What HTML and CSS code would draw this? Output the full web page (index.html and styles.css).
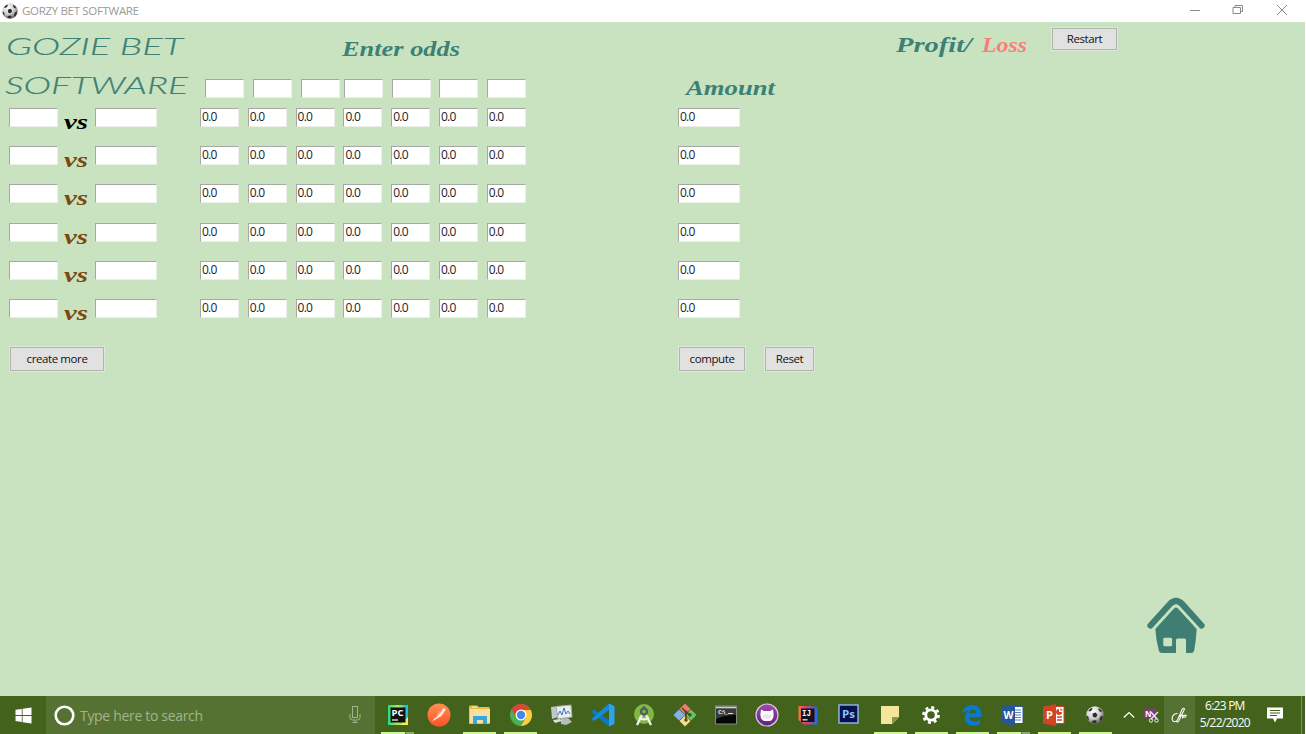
FILE: index.html
```html
<!DOCTYPE html>
<html lang="en">
<head>
<meta charset="utf-8">
<title>GORZY BET SOFTWARE</title>
<link rel="stylesheet" href="styles.css">
</head>
<body>
<svg class="defs" width="0" height="0">
  <defs>
    <radialGradient id="shade" cx=".38" cy=".3" r=".75"><stop offset="0" stop-color="#fff"/><stop offset=".55" stop-color="#ccc"/><stop offset="1" stop-color="#555"/></radialGradient>
    <linearGradient id="orange" x2="0" y2="1"><stop stop-color="#ff8f52"/><stop offset="1" stop-color="#ff5226"/></linearGradient>
    <linearGradient id="pcbg"><stop stop-color="#20d889"/><stop offset=".5" stop-color="#b6e84a"/><stop offset="1" stop-color="#13b6e8"/></linearGradient>
    <linearGradient id="ijbg"><stop stop-color="#f2793c"/><stop offset=".35" stop-color="#e63a6d"/><stop offset="1" stop-color="#1b6cf0"/></linearGradient>
    <linearGradient id="purple" x2="0" y2="1"><stop stop-color="#a14bb0"/><stop offset="1" stop-color="#5e2283"/></linearGradient>
    <symbol id="ball" viewBox="0 0 18 18">
      <circle cx="9" cy="9" r="8.7" fill="url(#shade)"/>
      <path d="M6.500 7.500 9.500 6.500l2 2.300-1.500 2.700-3-.4ZM2.500 4.500 5.300 2l1.400.5-1.400 2.300-2.300.8ZM12.700 2l2.700 2.300.3 2-2-.7-1.400-2.300ZM.700 9.600l1.700 1.100.5 2.700-.5.600C1.200 13.200.700 11.500.700 9.600ZM6.700 14.500l3.200-.3.900 1.400-1.400 1.500c-1.300.1-2.500-.3-3.400-.9ZM14.400 10.800l2.500-1.100c0 2.300-1 4.200-2.500 5.400l-.9-1.100Z" fill="#2c2c2c"/>
    </symbol>
  </defs>
</svg>

<div class="titlebar">
  <svg class="app-icon" width="16" height="16"><use href="#ball"/></svg>
  <span class="app-name">GORZY BET SOFTWARE</span>
  <svg class="window-controls" width="106" height="22" fill="none" stroke="#8a8a8a">
    <path d="M0 10.500h10M43 7.500h7.500v6h-7.500zM45 7.500v-2h7.500v6h-2M87 5l10 10M97 5L87 15"/>
  </svg>
</div>

<main class="workspace">
  <header class="head">
    <svg class="brand" width="205" height="86">
      <text x="6" y="33" textLength="177" lengthAdjust="spacingAndGlyphs">GOZIE BET</text>
      <text x="5" y="72" textLength="183" lengthAdjust="spacingAndGlyphs">SOFTWARE</text>
    </svg>
    <div class="odds-head">
      <svg class="script" width="330" height="57"><text x="137" y="34" textLength="118" lengthAdjust="spacingAndGlyphs">Enter odds</text></svg>
      <div class="labels"><span class="field odd"></span><span class="field odd"></span><span class="field odd third"></span><span class="field odd"></span><span class="field odd"></span><span class="field odd"></span><span class="field odd"></span></div>
    </div>
    <svg class="script amount-head" width="212" height="86"><text x="8" y="73" textLength="89" lengthAdjust="spacingAndGlyphs">Amount</text></svg>
    <svg class="script" width="162" height="86"><text x="6" y="30" textLength="76" lengthAdjust="spacingAndGlyphs">Profit/</text><text class="loss" x="92" y="30" textLength="45" lengthAdjust="spacingAndGlyphs">Loss</text></svg>
    <button class="btn restart">Restart</button>
  </header>

  <section class="matches">
    <div class="match first"><span class="field home"></span><svg class="vs" width="26" height="25"><text x="1" y="20" textLength="24" lengthAdjust="spacingAndGlyphs">vs</text></svg><span class="field away"></span><div class="odds"><span class="field">0.0</span><span class="field">0.0</span><span class="field">0.0</span><span class="field">0.0</span><span class="field">0.0</span><span class="field">0.0</span><span class="field">0.0</span></div><span class="field amount">0.0</span></div>
    <div class="match"><span class="field home"></span><svg class="vs" width="26" height="25"><text x="1" y="20" textLength="24" lengthAdjust="spacingAndGlyphs">vs</text></svg><span class="field away"></span><div class="odds"><span class="field">0.0</span><span class="field">0.0</span><span class="field">0.0</span><span class="field">0.0</span><span class="field">0.0</span><span class="field">0.0</span><span class="field">0.0</span></div><span class="field amount">0.0</span></div>
    <div class="match"><span class="field home"></span><svg class="vs" width="26" height="25"><text x="1" y="20" textLength="24" lengthAdjust="spacingAndGlyphs">vs</text></svg><span class="field away"></span><div class="odds"><span class="field">0.0</span><span class="field">0.0</span><span class="field">0.0</span><span class="field">0.0</span><span class="field">0.0</span><span class="field">0.0</span><span class="field">0.0</span></div><span class="field amount">0.0</span></div>
    <div class="match"><span class="field home"></span><svg class="vs" width="26" height="25"><text x="1" y="20" textLength="24" lengthAdjust="spacingAndGlyphs">vs</text></svg><span class="field away"></span><div class="odds"><span class="field">0.0</span><span class="field">0.0</span><span class="field">0.0</span><span class="field">0.0</span><span class="field">0.0</span><span class="field">0.0</span><span class="field">0.0</span></div><span class="field amount">0.0</span></div>
    <div class="match"><span class="field home"></span><svg class="vs" width="26" height="25"><text x="1" y="20" textLength="24" lengthAdjust="spacingAndGlyphs">vs</text></svg><span class="field away"></span><div class="odds"><span class="field">0.0</span><span class="field">0.0</span><span class="field">0.0</span><span class="field">0.0</span><span class="field">0.0</span><span class="field">0.0</span><span class="field">0.0</span></div><span class="field amount">0.0</span></div>
    <div class="match"><span class="field home"></span><svg class="vs" width="26" height="25"><text x="1" y="20" textLength="24" lengthAdjust="spacingAndGlyphs">vs</text></svg><span class="field away"></span><div class="odds"><span class="field">0.0</span><span class="field">0.0</span><span class="field">0.0</span><span class="field">0.0</span><span class="field">0.0</span><span class="field">0.0</span><span class="field">0.0</span></div><span class="field amount">0.0</span></div>
  </section>

  <div class="actions">
    <button class="btn create">create more</button>
    <button class="btn compute">compute</button>
    <button class="btn reset">Reset</button>
  </div>

  <div class="home-row">
    <svg width="58" height="57" viewBox="0 0 58 57">
      <path d="M3.500 28.500 22.500 7.500Q29 .500 35.500 7.500L54.500 28.500" fill="none" stroke="#3f7f73" stroke-width="6.300" stroke-linecap="round"/>
      <path d="M27 11.500q2-2 4 0L49.700 32Q49 44 47.200 53.500 46.500 56 44 56h-5V43q0-1.500-1.500-1.500h-7Q29 41.500 29 43v13H15q-2.500 0-3.200-2.500Q9 43 8.300 32Z" fill="#3f7f73"/>
      <rect x="16.300" y="40.800" width="8.800" height="8.500" rx="1.500" fill="#c9e3c0"/>
    </svg>
  </div>
</main>

<footer class="taskbar">
  <div class="start"><svg width="17" height="17" fill="#fff"><path d="M.5 2.800 6.800 1.900V8H.5ZM7.600 1.800 16.500.5V8H7.600ZM.5 8.900h6.300V15L.5 14.100ZM7.600 8.900h8.900v7.600L7.600 15.200Z"/></svg></div>
  <div class="search">
    <svg width="21" height="21"><circle cx="10.500" cy="10.500" r="8.800" fill="none" stroke="#fff" stroke-width="2.600"/></svg>
    <span class="hint">Type here to search</span>
    <svg class="mic" width="12" height="18" fill="none" stroke="#a3b48e"><rect x="3.500" y=".5" width="5" height="11"/><path d="M1 8v3.500q0 2.500 2.500 2.500h5q2.500 0 2.500-2.500V8M6 14v2.500M3.500 16.500h5"/></svg>
  </div>
  <div class="apps">
    <div class="app open more"><svg width="24" height="24"><path d="M2 2h16l4 3v17H2Z" fill="url(#pcbg)"/><path d="M17 2h5v9Z" fill="#14c5ef"/><path d="M14 22l8-8v8Z" fill="#f0ee47"/><rect x="4.500" y="4.500" width="15" height="15" fill="#111"/><text x="5.500" y="12.700" class="glyph" font-size="9" textLength="12" lengthAdjust="spacingAndGlyphs">PC</text><path d="M6 17h6" stroke="#ddd" stroke-width="1.400"/></svg></div>
    <div class="app"><svg width="24" height="24"><circle cx="12" cy="12" r="11.500" fill="url(#orange)"/><path d="M5 18.500 12 9l5-4 2 1.500-4.500 6.500L6 18Z" fill="#fde3d5"/><path d="m8 15 7-8" stroke="#ff7340"/></svg></div>
    <div class="app open"><svg width="24" height="24"><path d="M1 4q0-1.500 1.500-1.500H9L11 4h10.500v17H1Z" fill="#e8bd48"/><path d="M2 6h20v14H2Z" fill="#f9dfa0"/><path d="M5 21v-8h14v8h-4v-4H9v4Z" fill="#35a8dd"/><path d="M4 4h5" stroke="#fff4b8"/></svg></div>
    <div class="app open"><svg width="24" height="24"><circle cx="12" cy="12" r="11" fill="#4caf50"/><path d="M12 12 2.500 6.500A11 11 0 0 1 21.500 6.500Z" fill="#d9453a"/><path d="M12 7h9.800A11 11 0 0 1 12 23l5-8.500Z" fill="#fccd3d"/><path d="m2.500 6.500 5 8 4.500-7Z" fill="#d9453a"/><circle cx="12" cy="12" r="5.500" fill="#fff"/><circle cx="12" cy="12" r="4.200" fill="#4688ef"/></svg></div>
    <div class="app"><svg width="24" height="24"><path d="m1 4 7-1v11l-6 2Z" fill="#c1c6c9"/><path d="m6 3.500 15-1.500 1 12-14 2Z" fill="#e9edef" stroke="#a5aaac"/><path d="m8 12 2-4 2 4 2-7 2 6 2-3 2 3" fill="none" stroke="#2e7daa"/><path d="m11 16 7-1 4 4-6 3-5-1Z" fill="#b8bcbd"/><path d="m3 17 7-1 2 2-7 2Z" fill="#ddd"/></svg></div>
    <div class="app"><svg width="24" height="24"><path d="m18 .5 5.500 2.500v18L18 23.500Z" fill="#29a4ed"/><path d="M1 8l2.300-1.500L18 17.500v6L1 9.500Z" fill="#087bc7"/><path d="M1 15.500 18 .5V7L3.300 18 1 16.500Z" fill="#168bd8"/></svg></div>
    <div class="app"><svg width="24" height="24"><circle cx="12" cy="11" r="10" fill="#80b942"/><path d="M11 10 5 22M13 10l6 12M7 14.500q5 3.500 10 0" stroke="#edf0e8" stroke-width="2.400" fill="none"/><circle cx="12" cy="8.500" r="3" fill="#80b942" stroke="#53605a" stroke-width="2.500"/><path d="M12 3v3" stroke="#53605a" stroke-width="2"/></svg></div>
    <div class="app"><svg width="24" height="24"><path d="m12 .5 5.500 5.500L12 11.500 6.500 6Z" fill="#f27974"/><path d="m6 6.500 6 5.500-6 5.500L.5 12Z" fill="#85aeef"/><path d="m18 6.500 5.500 5.500-5.500 5.500L12 12Z" fill="#6ec45a"/><path d="m12 12.500 5.500 5.500-5.500 5.500L6.500 18Z" fill="#f7df7f"/><path d="m9 5 4 4v8M13 9l4 3" stroke="#4b4a2c" stroke-width="1.700" fill="none"/><g fill="#4b4a2c"><circle cx="13" cy="9" r="1.500"/><circle cx="17" cy="12" r="1.700"/><circle cx="13" cy="17" r="1.700"/></g></svg></div>
    <div class="app"><svg width="24" height="24"><rect x="1.500" y="3" width="21" height="18" fill="#050505" stroke="#888"/><path d="M2 3.500h20v2H2Z" fill="#ccc"/><path d="M2 6h20v6Q10 12 2 16Z" fill="#3a3a3a"/><text x="4" y="11" class="glyph" font-size="5.500">C:\_</text><path d="M14 10.500h5" stroke="#ddd"/></svg></div>
    <div class="app"><svg width="24" height="24"><circle cx="12" cy="12" r="11" fill="url(#purple)" stroke="#dec8e2" stroke-width="1.200"/><path d="M6 6.500 9 8h6l3-1.500.5 4q.6 5.800-3.500 7.500H9q-4-1.700-3.500-7.500Z" fill="#fff"/><path d="M7.500 12q4.500-2 9 0 0 4-4.500 4t-4.500-4" fill="#eee4ed"/></svg></div>
    <div class="app"><svg width="24" height="24"><path d="M2.500 3H14l7.500 1v17.500H8L2.500 17Z" fill="url(#ijbg)"/><rect x="5" y="5.500" width="13.500" height="13.500" fill="#15121c"/><text x="6" y="13" class="glyph serif" font-size="9" textLength="9" lengthAdjust="spacingAndGlyphs">IJ</text><path d="M6.500 16.800h5" stroke="#ddd" stroke-width="1.400"/></svg></div>
    <div class="app"><svg width="24" height="24"><rect x="2" y="2" width="19" height="18" fill="#0a0f4f" stroke="#8bbde9" stroke-width="1.400"/><text x="5" y="15" class="glyph ps" font-size="11" textLength="13" lengthAdjust="spacingAndGlyphs">Ps</text></svg></div>
    <div class="app open"><svg width="24" height="24"><path d="M3 3h18v11l-7 7H3Z" fill="#f3e69b"/><path d="M14 21v-7h7Z" fill="#8d964e"/></svg></div>
    <div class="app open"><svg width="24" height="24"><circle cx="12" cy="12" r="5.200" fill="none" stroke="#fff" stroke-width="2.800"/><circle cx="12" cy="12" r="7.600" fill="none" stroke="#fff" stroke-width="2.600" stroke-dasharray="3 2.970"/></svg></div>
    <div class="app open"><svg width="24" height="24"><path d="M2 10.500C3.200 4.700 7 2 12 2c6 0 9.500 4.300 9.500 10v2H9c.3 5 7 5.400 11 3v3.900c-7 3.600-15 1.500-15-6 0-4 2-6.500 5-8C6.800 7.300 4 8.500 2 10.500Zm7-.3h7c0-5-6.500-4.500-7 0Z" fill="#087bd0" fill-rule="evenodd"/></svg></div>
    <div class="app open more"><svg width="24" height="24"><path d="M12 3.500h10v17H12Z" fill="#fff" stroke="#2d5797"/><path d="M14 7h6M14 9.500h6M14 12h6M14 14.500h6M14 17h6" stroke="#5b7fb8"/><path d="m1 3.500 13-2.500v22L1 20.500Z" fill="#285797"/><text x="2.500" y="15.500" class="glyph" font-size="10" textLength="10" lengthAdjust="spacingAndGlyphs">W</text></svg></div>
    <div class="app open"><svg width="24" height="24"><path d="M12 3.500h10v17H12Z" fill="#fff" stroke="#cf4525"/><path d="M15 14h5M15 17h5" stroke="#cf4525" stroke-width="1.500"/><path d="M17 6a3 3 0 1 0 3 3h-3ZM18.500 5v2.500H21" fill="#cf4525"/><path d="m1 3.500 13-2.500v22L1 20.500Z" fill="#cf4525"/><text x="4" y="16" class="glyph" font-size="11">P</text></svg></div>
    <div class="app open"><svg width="18" height="18"><use href="#ball"/></svg></div>
  </div>
  <div class="tray">
    <svg class="chevron" width="12" height="8" fill="none" stroke="#fff" stroke-width="1.200"><path d="m.8 6.500 5.200-5 5.200 5"/></svg>
    <svg class="snip" width="15" height="15"><path d="M0 1 12 0v12L0 10Z" fill="#81397e"/><text x="1" y="8.500" class="glyph" font-size="8">N</text><path d="m7 4 6 7M14 4l-7 7" stroke="#eee" stroke-width="1.400"/><circle cx="7" cy="12.500" r="1.700" fill="none" stroke="#eee"/><circle cx="12.500" cy="12.500" r="1.700" fill="none" stroke="#eee"/></svg>
    <div class="pen"><svg width="17" height="17" fill="none" stroke="#fff" stroke-width="1.100"><path d="M6.500 6.500C3 6 .8 9.500 1.200 12.500c.5 3 4 2.800 5.500 0L11 2.500q1.500-2.200 2.500-.5L8 13.500q-1.500 2.500-2.500 1M8.500 10q2-3.500 3-1.500t3 1.500q1.500-2-.5-2-2.500.5-2.500 3.500"/></svg></div>
    <div class="clock"><span class="time">6:23 PM</span><span class="date">5/22/2020</span></div>
    <svg class="notice" width="16" height="17"><path d="M0 .5h16v11h-6L8 15.500 6 11.500H0Z" fill="#fff"/><path d="M3 3.500h10M3 6h10M3 8.500h7" stroke="#43621b"/></svg>
  </div>
</footer>
</body>
</html>
```
FILE: styles.css
```css
* { box-sizing: border-box; }

body {
  margin: 0;
  width: 1306px;
  height: 734px;
  overflow: hidden;
  display: flex;
  flex-direction: column;
  background: #fff;
  font-family: "Open Sans", "Noto Sans", sans-serif;
}

svg { display: block; flex: none; }
.defs { position: absolute; }

.titlebar {
  height: 22px;
  flex: none;
  display: flex;
  align-items: center;
  padding-left: 2px;
  background: #fff;
}
.app-icon { margin-right: 4px; }
.app-name { padding-bottom: 1px; color: #999; font-size: 11.500px; letter-spacing: -.32px; white-space: nowrap; }
.window-controls { margin-left: auto; margin-right: 10px; }

.workspace {
  width: 1305px;
  height: 674px;
  flex: none;
  display: flex;
  flex-direction: column;
  background: #c9e3c0;
}

.head { height: 86px; flex: none; display: flex; align-items: flex-start; }
.brand { fill: #3c8076; stroke: #3c8076; stroke-width: .2px; font: italic 300 24px Lato, sans-serif; }
.script { fill: #3c8076; font: italic bold 21px "Liberation Serif", serif; }
.loss { fill: #fb7d7b; }
.odds-head { width: 473px; }
.labels { display: flex; gap: 8.900px; }
.third { margin-right: -5px; }

.field {
  display: block;
  flex: none;
  height: 19px;
  padding-left: 1px;
  background: #fff;
  border: 1px solid;
  border-color: #a5a8a4 #eaf2e7 #eaf2e7 #a5a8a4;
  color: #222;
  font-size: 12px;
  line-height: 16px;
  letter-spacing: -.75px;
}
.odd, .odds .field { width: 39px; }

.matches { height: 229px; flex: none; display: grid; grid-template-rows: repeat(6, 38.200px); }
.match { display: flex; align-items: flex-start; padding-left: 9px; }
.home { width: 49px; margin-right: 5px; }
.away { width: 62px; margin: 0 43px 0 6px; }
.vs { margin-top: 1px; fill: #7d480d; font: italic bold 22px "Liberation Serif", serif; }
.first .vs { fill: #000; }
.odds { width: 478px; display: flex; gap: 8.800px; }
.amount { width: 62px; }

.actions { display: flex; padding: 10px 0 0 10px; }
.btn {
  height: 24px;
  flex: none;
  padding: 0 0 2px;
  background: #e1e1e1;
  border: 1px solid #b2b4b1;
  outline: 1px solid #dce9d8;
  outline-offset: 0;
  color: #111;
  font: 11.500px "Open Sans", "Noto Sans", sans-serif;
  letter-spacing: -.4px;
}
.restart { width: 65px; height: 22px; margin-top: 6px; }
.create { width: 94px; margin-right: 575px; }
.compute { width: 66px; margin-right: 20px; }
.reset { width: 49px; }

.home-row { margin-top: auto; padding: 0 100px 42px 0; display: flex; justify-content: flex-end; }

.taskbar {
  height: 38px;
  flex: none;
  width: 1305px;
  display: flex;
  background: #43621b;
}
.start { width: 46px; display: flex; align-items: center; justify-content: center; }
.search {
  width: 329px;
  display: flex;
  align-items: center;
  padding: 0 14px 0 8px;
  background: #557233;
}
.hint { margin-left: 5px; color: #a3b48e; font-size: 14px; letter-spacing: -.32px; white-space: nowrap; }
.mic { margin-left: auto; }

.apps { flex: none; display: grid; grid-template-columns: repeat(18, 41.050px); margin-left: 2px; }
.app {
  display: flex;
  align-items: center;
  justify-content: center;
  background: linear-gradient(#d0f792, #d0f792) 50% 100% / 0 2px no-repeat;
}
.open { background-size: 33px 2px; }
.more { background-image: linear-gradient(90deg, #d0f792 24px, #5f7a3c 24px, #5f7a3c 25px, #8fa871 25px); }

.glyph { fill: #fff; font-family: "Open Sans", sans-serif; font-weight: 700; }
.serif { font-family: "Liberation Mono", monospace; }
.ps { fill: #8bc4f5; }

.tray { display: flex; align-items: center; flex: 1; border-right: 1px solid #7b9160; margin-right: 3px; }
.chevron { margin-left: 7px; }
.snip { margin: 0 5px 0 9px; }
.pen { width: 31px; height: 38px; display: flex; align-items: center; justify-content: center; background: #557233; }
.clock {
  width: 60px;
  display: flex;
  flex-direction: column;
  align-items: center;
  color: #fff;
  font-size: 12px;
  line-height: 17px;
  letter-spacing: -.75px;
  white-space: nowrap;
  padding-bottom: 2px;
}
.notice { margin-left: 12px; }
```
